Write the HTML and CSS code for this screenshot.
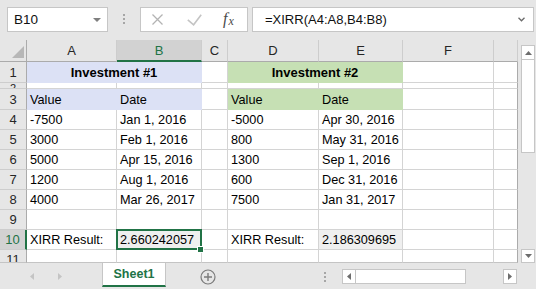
FILE: index.html
```html
<!DOCTYPE html>
<html>
<head>
<meta charset="utf-8">
<link rel="stylesheet" href="styles.css">
</head>
<body>
<div class="app">
  <div class="toolbar">
    <div class="namebox"><span>B10</span><i class="caret"></i></div>
    <div class="grip"><i></i><i></i><i></i></div>
    <div class="fbtns">
      <svg class="ic-x" width="11" height="11" viewBox="0 0 11 11"><path d="M0.5 0.5L10.5 10.5M10.5 0.5L0.5 10.5" stroke="#b3b3b3" stroke-width="1.3" fill="none"/></svg>
      <svg class="ic-check" width="15" height="12" viewBox="0 0 15 12"><path d="M0.8 5.8L6.6 10.8L14.2 0.8" fill="none" stroke="#c4c4c4" stroke-width="1.6"/></svg>
      <span class="fx"><i>f</i><i class="fx-x">x</i></span>
    </div>
    <div class="formula"><span>=XIRR(A4:A8,B4:B8)</span><svg width="7" height="5" viewBox="0 0 7 5"><path d="M0.5 0.8L3.5 3.8L6.5 0.8" fill="none" stroke="#6a6a6a" stroke-width="1.3"/></svg></div>
  </div>

  <div class="main">
    <div class="grid">
      <div class="corner"><svg width="12" height="12" viewBox="0 0 12 12"><path d="M12 0V12H0Z" fill="#b7b7b7"/></svg></div>
      <div class="h">A</div><div class="h on">B</div><div class="h">C</div><div class="h">D</div><div class="h">E</div><div class="h">F</div><div class="h"></div>

      <div class="r">1</div><div class="c blue b mid span2">Investment #1</div><div class="c"></div><div class="c green b mid span2">Investment #2</div><div class="c"></div><div class="c g"></div>

      <div class="r r2"><span class="r2t">2</span></div><div class="c"></div><div class="c"></div><div class="c"></div><div class="c"></div><div class="c"></div><div class="c"></div><div class="c g"></div>

      <div class="r">3</div><div class="c blue">Value</div><div class="c blue">Date</div><div class="c"></div><div class="c green">Value</div><div class="c green">Date</div><div class="c"></div><div class="c g"></div>

      <div class="r">4</div><div class="c">-7500</div><div class="c">Jan 1, 2016</div><div class="c"></div><div class="c">-5000</div><div class="c">Apr 30, 2016</div><div class="c"></div><div class="c g"></div>
      <div class="r">5</div><div class="c">3000</div><div class="c">Feb 1, 2016</div><div class="c"></div><div class="c">800</div><div class="c">May 31, 2016</div><div class="c"></div><div class="c g"></div>
      <div class="r">6</div><div class="c">5000</div><div class="c">Apr 15, 2016</div><div class="c"></div><div class="c">1300</div><div class="c">Sep 1, 2016</div><div class="c"></div><div class="c g"></div>
      <div class="r">7</div><div class="c">1200</div><div class="c">Aug 1, 2016</div><div class="c"></div><div class="c">600</div><div class="c">Dec 31, 2016</div><div class="c"></div><div class="c g"></div>
      <div class="r">8</div><div class="c">4000</div><div class="c">Mar 26, 2017</div><div class="c"></div><div class="c">7500</div><div class="c">Jan 31, 2017</div><div class="c"></div><div class="c g"></div>
      <div class="r">9</div><div class="c"></div><div class="c"></div><div class="c"></div><div class="c"></div><div class="c"></div><div class="c"></div><div class="c g"></div>
      <div class="r on">10</div><div class="c">XIRR Result:</div><div class="c gray sel">2.660242057<span class="selbox"><span class="handle"></span></span></div><div class="c"></div><div class="c">XIRR Result:</div><div class="c gray">2.186309695</div><div class="c"></div><div class="c g"></div>
      <div class="r last">11</div><div class="c last"></div><div class="c last"></div><div class="c last"></div><div class="c last"></div><div class="c last"></div><div class="c last"></div><div class="c g last"></div>
    </div>
    <div class="vscroll">
      <div class="vbtn"><svg width="7" height="4" viewBox="0 0 7 4"><path d="M0 4L3.5 0L7 4Z" fill="#6d6d6d"/></svg></div>
      <div class="vthumb"></div>
      <div class="vtrack"></div>
      <div class="vbtn"><svg width="7" height="4" viewBox="0 0 7 4"><path d="M0 0L3.5 4L7 0Z" fill="#6d6d6d"/></svg></div>
    </div>
  </div>

  <div class="tabbar">
    <svg class="nav nav-l" width="4" height="7" viewBox="0 0 4 7"><path d="M4 0V7L0 3.5Z" fill="#c4c4c4"/></svg>
    <svg class="nav nav-r" width="4" height="7" viewBox="0 0 4 7"><path d="M0 0V7L4 3.5Z" fill="#c4c4c4"/></svg>
    <div class="tab">Sheet1</div>
    <svg class="plus" width="16" height="16" viewBox="0 0 16 16"><circle cx="8" cy="8" r="7" fill="none" stroke="#7b7b7b" stroke-width="1.2"/><path d="M4 8H12M8 4V12" stroke="#7b7b7b" stroke-width="1.4"/></svg>
    <div class="grip hgrip"><i></i><i></i><i></i></div>
    <div class="hscroll">
      <div class="hbtn"><svg width="4" height="7" viewBox="0 0 4 7"><path d="M4 0V7L0 3.5Z" fill="#6d6d6d"/></svg></div>
      <div class="hthumb"></div>
      <div class="htrack"></div>
      <div class="hbtn"><svg width="4" height="7" viewBox="0 0 4 7"><path d="M0 0V7L4 3.5Z" fill="#6d6d6d"/></svg></div>
    </div>
  </div>
</div>
</body>
</html>
```

FILE: styles.css
```css
html, body {
  margin: 0;
  padding: 0;
}
body {
  width: 536px;
  height: 289px;
  overflow: hidden;
  background: #e6e6e6;
  font-family: "Liberation Sans", Arial, sans-serif;
  font-size: 12.7px;
  color: #000;
}
.app {
  width: 536px;
  height: 289px;
  display: flex;
  flex-direction: column;
}

/* toolbar */
.toolbar {
  height: 40px;
  flex: none;
  box-sizing: border-box;
  display: flex;
  align-items: flex-start;
  padding: 7px 0 0 7px;
}
.namebox {
  width: 101px;
  height: 25px;
  box-sizing: border-box;
  border: 1px solid #c6c6c6;
  background: #fff;
  display: flex;
  align-items: center;
  justify-content: space-between;
  padding: 0 6px 0 6px;
  font-size: 13.5px;
  color: #111;
}
.caret {
  width: 0;
  height: 0;
  border-left: 4px solid transparent;
  border-right: 4px solid transparent;
  border-top: 4px solid #7f7f7f;
}
.grip {
  margin-left: 15px;
  margin-top: 7px;
  display: flex;
  flex-direction: column;
  gap: 2px;
}
.grip i {
  display: block;
  width: 2px;
  height: 2px;
  background: #a6a6a6;
}
.fbtns {
  margin-left: 15px;
  width: 108px;
  height: 25px;
  box-sizing: border-box;
  border: 1px solid #c6c6c6;
  background: #fff;
  display: flex;
  align-items: center;
  padding-left: 11px;
}
.ic-check {
  margin-left: 24px;
}
.fx {
  margin-left: 21px;
  font-family: "Liberation Serif", "Times New Roman", serif;
  color: #4a4a4a;
  font-size: 16px;
  line-height: 16px;
}
.fx i {
  font-style: italic;
}
.fx-x {
  font-size: 12px;
  margin-left: 1px;
  position: relative;
  top: 1px;
}
.formula {
  margin-left: 4px;
  width: 282px;
  height: 25px;
  box-sizing: border-box;
  border: 1px solid #c6c6c6;
  background: #fff;
  display: flex;
  align-items: center;
  justify-content: space-between;
  padding: 0 8px 0 12px;
  font-size: 13px;
  color: #111;
}

/* sheet */
.main {
  display: flex;
  height: 223px;
  flex: none;
}
.grid {
  width: 518px;
  display: grid;
  grid-template-columns: 27px 90px 85px 26px 91px 84px 91px 24px;
  grid-template-rows: 22px 21px 6px 21px repeat(7, 20px) 13px;
  background: #fff;
}
.grid > div {
  box-sizing: border-box;
  display: flex;
  align-items: flex-end;
  white-space: nowrap;
  line-height: 16px;
}
.corner {
  background: #e6e6e6;
  border-right: 1px solid #ababab;
  border-bottom: 1px solid #ababab;
  justify-content: flex-end;
  padding: 0 2px 3px 0;
}
.h {
  background: #e6e6e6;
  border-right: 1px solid #cdcdcd;
  border-bottom: 1px solid #ababab;
  justify-content: center;
  padding-bottom: 2px;
  color: #262626;
  font-size: 13px;
}
.h.on {
  background: #d2d2d2;
  color: #217346;
  border-bottom: 2px solid #217346;
  padding-bottom: 1px;
}
.r {
  background: #e6e6e6;
  border-right: 1px solid #ababab;
  border-bottom: 1px solid #cdcdcd;
  justify-content: center;
  padding-bottom: 1px;
  color: #262626;
  overflow: hidden;
  font-size: 13px;
}
.grid > .r2 {
  align-items: flex-start;
  padding: 0;
}
.r2t {
  display: block;
  height: 5px;
  line-height: 10px;
  overflow: hidden;
  font-size: 11px;
}
.r.on {
  background: #d2d2d2;
  color: #217346;
  border-right: 2px solid #217346;
}
.c {
  border-right: 1px solid #d4d4d4;
  border-bottom: 1px solid #d4d4d4;
  padding: 0 3px 1px 3px;
}
.grid > .last {
  align-items: flex-start;
  padding-top: 2px;
  border-bottom-color: #c4c4c4;
  overflow: hidden;
}
.c.g {
  border-right-color: #ababab;
}
.span2 {
  grid-column: span 2;
}
.mid {
  justify-content: center;
}
.b {
  font-weight: bold;
  font-size: 13px;
}
.blue {
  background: #dce1f5;
  border-color: #dce1f5;
}
.green {
  background: #c6e0b4;
  border-color: #c6e0b4;
}
.gray {
  background: #efefef;
}
.sel {
  position: relative;
}
.selbox {
  position: absolute;
  left: -1px;
  top: -1px;
  right: -1px;
  bottom: -1px;
  border: 2px solid #217346;
  z-index: 2;
}
.handle {
  position: absolute;
  right: -4px;
  bottom: -5px;
  width: 7px;
  height: 7px;
  box-sizing: border-box;
  background: #217346;
  border: 1px solid #fff;
}

/* vertical scrollbar */
.vscroll {
  width: 18px;
  box-sizing: border-box;
  display: flex;
  flex-direction: column;
  padding: 5px 1px 0 3px;
}
.vbtn {
  height: 15px;
  flex: none;
  box-sizing: border-box;
  border: 1px solid #c6c6c6;
  background: #fff;
  display: flex;
  align-items: center;
  justify-content: center;
}
.vbtn:last-child {
  height: 14px;
}
.vthumb {
  height: 93px;
  flex: none;
  box-sizing: border-box;
  border: 1px solid #c6c6c6;
  border-top: none;
  background: #fff;
}
.vtrack {
  flex: 1;
}

/* tab bar */
.tabbar {
  height: 26px;
  flex: none;
  display: flex;
  align-items: flex-start;
}
.nav {
  margin-top: 10px;
}
.nav-l {
  margin-left: 30px;
}
.nav-r {
  margin-left: 24px;
}
.tab {
  margin-left: 40px;
  width: 64px;
  height: 24px;
  box-sizing: border-box;
  background: #fff;
  border-left: 1px solid #c6c6c6;
  border-right: 1px solid #c6c6c6;
  border-bottom: 2px solid #217346;
  display: flex;
  justify-content: center;
  align-items: flex-end;
  padding-bottom: 3px;
  line-height: 16px;
  font-weight: bold;
  font-size: 12.5px;
  color: #217346;
}
.plus {
  margin-left: 34px;
  margin-top: 6px;
}
.hgrip {
  margin-left: 108px;
  margin-top: 9px;
}
.hscroll {
  margin-left: 16px;
  margin-top: 6px;
  width: 175px;
  height: 15px;
  display: flex;
}
.hbtn {
  width: 14px;
  flex: none;
  box-sizing: border-box;
  border: 1px solid #c6c6c6;
  background: #fff;
  display: flex;
  align-items: center;
  justify-content: center;
}
.hthumb {
  width: 110px;
  flex: none;
  box-sizing: border-box;
  border: 1px solid #c6c6c6;
  border-left: none;
  background: #fff;
}
.htrack {
  flex: 1;
}
```
